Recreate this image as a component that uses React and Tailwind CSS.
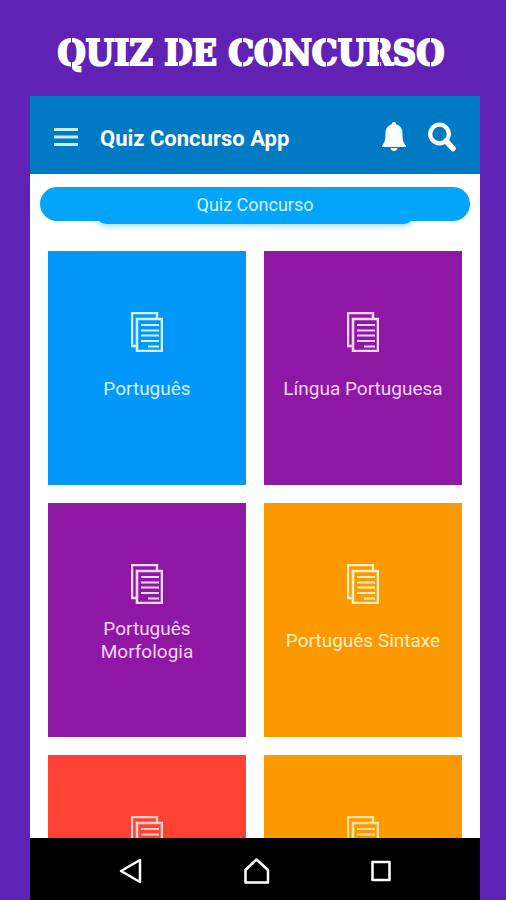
import React from 'react';

const categories = [
    { id: 1, name: 'Português', color: 'bg-[#0298f9]', tint: 'text-[#d3f1ff]' },
    { id: 2, name: 'Língua Portuguesa', color: 'bg-[#8e18a3]', tint: 'text-[#f8d6fd]' },
    { id: 3, name: 'Português Morfologia', color: 'bg-[#8e18a3]', tint: 'text-[#f8d6fd]' },
    { id: 4, name: 'Portugués Sintaxe', color: 'bg-[#fd9900]', tint: 'text-[#fff0c4]' },
    { id: 5, name: '', color: 'bg-[#ff4234]', tint: 'text-[#ffd0c4]' },
    { id: 6, name: '', color: 'bg-[#fd9900]', tint: 'text-[#ffe09a]' },
];

// share of the letter's width at which the stencil bridge cuts it
const bridges = { Q: 48, D: 48, C: 54, O: 48, R: 48 };

function StencilTitle({ text }) {
    return (
        <h1
            aria-label={text}
            className="flex h-[96px] shrink-0 items-center justify-center pt-2 pr-2 font-['DejaVu_Serif_Condensed','DejaVu_Serif',serif] text-[36px] leading-10 font-bold whitespace-pre text-white [-webkit-text-stroke:2px_white]"
        >
            {text.split('').map((letter, i) => (
                <span key={i} className="relative">
                    {letter}
                    {bridges[letter] && (
                        <span className="absolute inset-y-0 w-px bg-[#6021b5]" style={{ left: `${bridges[letter]}%` }} />
                    )}
                </span>
            ))}
        </h1>
    );
}

function PagesIcon() {
    return (
        <svg viewBox="0 0 32 40" className="h-10 w-8" fill="none" stroke="currentColor" strokeWidth="2">
            <path d="M6 34H1V1h25v5" strokeWidth="2.400" />
            <path d="M6 7h25v32H6z" strokeWidth="2.600" />
            <path d="M10 13h18M10 18.500h18M10 23.500h18M10 29h18M17 34.500h11" />
        </svg>
    );
}

function CategoryCard({ category }) {
    return (
        <button className={`flex h-[234px] flex-col items-center px-4 pt-[61px] ${category.color} ${category.tint}`}>
            <PagesIcon />
            <span className="mt-3 flex h-12 items-center text-center text-[19px] leading-[23px]">{category.name}</span>
        </button>
    );
}

export default function App() {
    return (
        <div className="flex h-screen flex-col overflow-hidden bg-[#6021b5] pr-[26px] pl-[30px] font-['Roboto',sans-serif]">
            <StencilTitle text="QUIZ DE CONCURSO" />

            <header className="flex h-[78px] shrink-0 items-center bg-[#0279c3] pt-1 pr-6 pl-6 text-white">
                <button aria-label="Menu" className="text-[#c9eeff]">
                    <svg viewBox="0 0 24 18" className="h-[18px] w-6" stroke="currentColor" strokeWidth="3">
                        <path d="M0 1.500h24M0 9h24M0 16.500h24" />
                    </svg>
                </button>
                <h2 className="ml-[22px] flex-1 pt-1 text-[22px] leading-7 font-bold">Quiz Concurso App</h2>
                <button aria-label="Notifications">
                    <svg viewBox="0 0 24 30" className="h-[30px] w-6" fill="currentColor">
                        <path d="M12 0c1.300 0 2 .9 2 2.200 4.200 1.100 6.500 4.500 6.500 9 0 6.500.6 9.300 3.500 12.300V25H0v-1.500c2.900-3 3.500-5.800 3.500-12.300 0-4.500 2.300-7.900 6.500-9C10 .9 10.700 0 12 0z" />
                        <path d="M8.500 26h7c-.3 1.800-1.700 3-3.500 3s-3.200-1.200-3.500-3z" />
                    </svg>
                </button>
                <button aria-label="Search" className="ml-[22px]">
                    <svg viewBox="0 0 28 30" className="h-[30px] w-7" fill="none" stroke="currentColor">
                        <circle cx="11.500" cy="12" r="9.300" strokeWidth="4.200" />
                        <path d="M18 19l7 7.500" strokeWidth="5.500" strokeLinecap="round" />
                    </svg>
                </button>
            </header>

            <main className="flex-1 overflow-hidden bg-white">
                <div className="relative isolate mx-[10px] mt-[13px]">
                    <button className="h-[34px] w-full rounded-full bg-[#02a5f9] pt-[2px] text-[18px] leading-6 text-[#d3f1ff]">
                        Quiz Concurso
                    </button>
                    <div className="absolute inset-x-14 -bottom-[3px] -z-10 h-5 rounded-[10px] bg-[#02a5f9] shadow-[0_2px_6px_#9adcf8]" />
                </div>
                <div className="grid grid-cols-2 gap-[18px] px-[18px] pt-[30px]">
                    {categories.map(category => (
                        <CategoryCard key={category.id} category={category} />
                    ))}
                </div>
            </main>

            <nav className="flex h-[62px] shrink-0 items-center justify-between bg-black px-[89px] pt-1 text-white">
                <button aria-label="Back">
                    <svg viewBox="0 0 24 26" className="h-[26px] w-6" fill="none" stroke="currentColor" strokeWidth="2.500" strokeLinejoin="round">
                        <path d="M21 2v22L2 13z" />
                    </svg>
                </button>
                <button aria-label="Home">
                    <svg viewBox="0 0 26 26" className="h-[26px] w-[26px]" fill="none" stroke="currentColor" strokeWidth="2.500" strokeLinejoin="round">
                        <path d="M12.500 1.500L24 12v12.500H1.500V12z" />
                    </svg>
                </button>
                <button aria-label="Recent apps">
                    <svg viewBox="0 0 20 22" className="h-[22px] w-5" fill="none" stroke="currentColor" strokeWidth="2.500" strokeLinejoin="round">
                        <path d="M1.500 2h17v18h-17z" />
                    </svg>
                </button>
            </nav>
        </div>
    );
}
